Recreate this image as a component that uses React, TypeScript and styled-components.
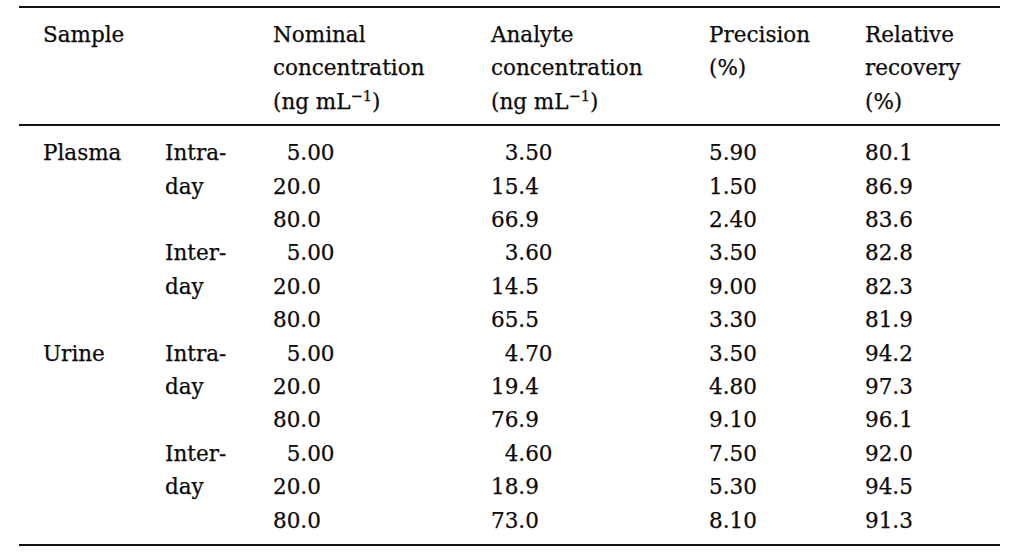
import React from "react";
import styled, { createGlobalStyle } from "styled-components";

const Global = createGlobalStyle`
  html, body { margin: 0; padding: 0; background: #ffffff; }
  body { width: 1024px; height: 552px; overflow: hidden; }
`;

const Page = styled.div`
  padding: 6px 0 0 19px;
  width: 981px;
  font-family: "DejaVu Serif", "Liberation Serif", serif;
  font-size: 21.5px;
  color: #0a0a0a;
  -webkit-text-stroke: 0.25px #0a0a0a;
`;

const Table = styled.table`
  width: 981px;
  border-collapse: collapse;
  table-layout: fixed;
  border-top: 2px solid #111;
  border-bottom: 2px solid #111;
`;

const Head = styled.thead`
  border-bottom: 2px solid #111;
`;

const HeadCell = styled.th<{ $first?: boolean }>`
  text-align: left;
  vertical-align: top;
  font-weight: normal;
  line-height: 33.4px;
  padding: 10px 0 6px ${(p) => (p.$first ? "24px" : "0")};
  white-space: nowrap;
`;

const Cell = styled.td<{ $first?: boolean; $top?: boolean; $bottom?: boolean }>`
  text-align: left;
  vertical-align: top;
  line-height: 33.4px;
  height: 33.4px;
  padding: ${(p) => (p.$top ? "10px" : "0")} 0 ${(p) => (p.$bottom ? "7px" : "0")}
    ${(p) => (p.$first ? "24px" : "0")};
  white-space: nowrap;
`;

const Num = styled.span<{ $indent?: boolean }>`
  padding-left: ${(p) => (p.$indent ? "0.636em" : "0")};
`;

const Sup = styled.sup`
  font-size: 0.68em;
  line-height: 0;
  vertical-align: 0.55em;
`;

type Row = {
  sample: string;
  kind: string;
  nominal: string;
  analyte: string;
  precision: string;
  recovery: string;
};

const rows: Row[] = [
  { sample: "Plasma", kind: "Intra-", nominal: "5.00", analyte: "3.50", precision: "5.90", recovery: "80.1" },
  { sample: "", kind: "day", nominal: "20.0", analyte: "15.4", precision: "1.50", recovery: "86.9" },
  { sample: "", kind: "", nominal: "80.0", analyte: "66.9", precision: "2.40", recovery: "83.6" },
  { sample: "", kind: "Inter-", nominal: "5.00", analyte: "3.60", precision: "3.50", recovery: "82.8" },
  { sample: "", kind: "day", nominal: "20.0", analyte: "14.5", precision: "9.00", recovery: "82.3" },
  { sample: "", kind: "", nominal: "80.0", analyte: "65.5", precision: "3.30", recovery: "81.9" },
  { sample: "Urine", kind: "Intra-", nominal: "5.00", analyte: "4.70", precision: "3.50", recovery: "94.2" },
  { sample: "", kind: "day", nominal: "20.0", analyte: "19.4", precision: "4.80", recovery: "97.3" },
  { sample: "", kind: "", nominal: "80.0", analyte: "76.9", precision: "9.10", recovery: "96.1" },
  { sample: "", kind: "Inter-", nominal: "5.00", analyte: "4.60", precision: "7.50", recovery: "92.0" },
  { sample: "", kind: "day", nominal: "20.0", analyte: "18.9", precision: "5.30", recovery: "94.5" },
  { sample: "", kind: "", nominal: "80.0", analyte: "73.0", precision: "8.10", recovery: "91.3" },
];

const short = (v: string) => v.indexOf(".") === 1;

export default function App() {
  return (
    <>
      <Global />
      <Page>
        <Table>
          <colgroup>
            <col style={{ width: 146 }} />
            <col style={{ width: 108 }} />
            <col style={{ width: 218 }} />
            <col style={{ width: 218 }} />
            <col style={{ width: 156 }} />
            <col style={{ width: 135 }} />
          </colgroup>
          <Head>
            <tr>
              <HeadCell $first>Sample</HeadCell>
              <HeadCell />
              <HeadCell>
                Nominal
                <br />
                concentration
                <br />
                (ng mL<Sup>−1</Sup>)
              </HeadCell>
              <HeadCell>
                Analyte
                <br />
                concentration
                <br />
                (ng mL<Sup>−1</Sup>)
              </HeadCell>
              <HeadCell>
                Precision
                <br />
                (%)
              </HeadCell>
              <HeadCell>
                Relative
                <br />
                recovery
                <br />
                (%)
              </HeadCell>
            </tr>
          </Head>
          <tbody>
            {rows.map((r, i) => {
              const top = i === 0;
              const bottom = i === rows.length - 1;
              return (
                <tr key={i}>
                  <Cell $first $top={top} $bottom={bottom}>{r.sample}</Cell>
                  <Cell $top={top} $bottom={bottom}>{r.kind}</Cell>
                  <Cell $top={top} $bottom={bottom}>
                    <Num $indent={short(r.nominal)}>{r.nominal}</Num>
                  </Cell>
                  <Cell $top={top} $bottom={bottom}>
                    <Num $indent={short(r.analyte)}>{r.analyte}</Num>
                  </Cell>
                  <Cell $top={top} $bottom={bottom}>{r.precision}</Cell>
                  <Cell $top={top} $bottom={bottom}>{r.recovery}</Cell>
                </tr>
              );
            })}
          </tbody>
        </Table>
      </Page>
    </>
  );
}
